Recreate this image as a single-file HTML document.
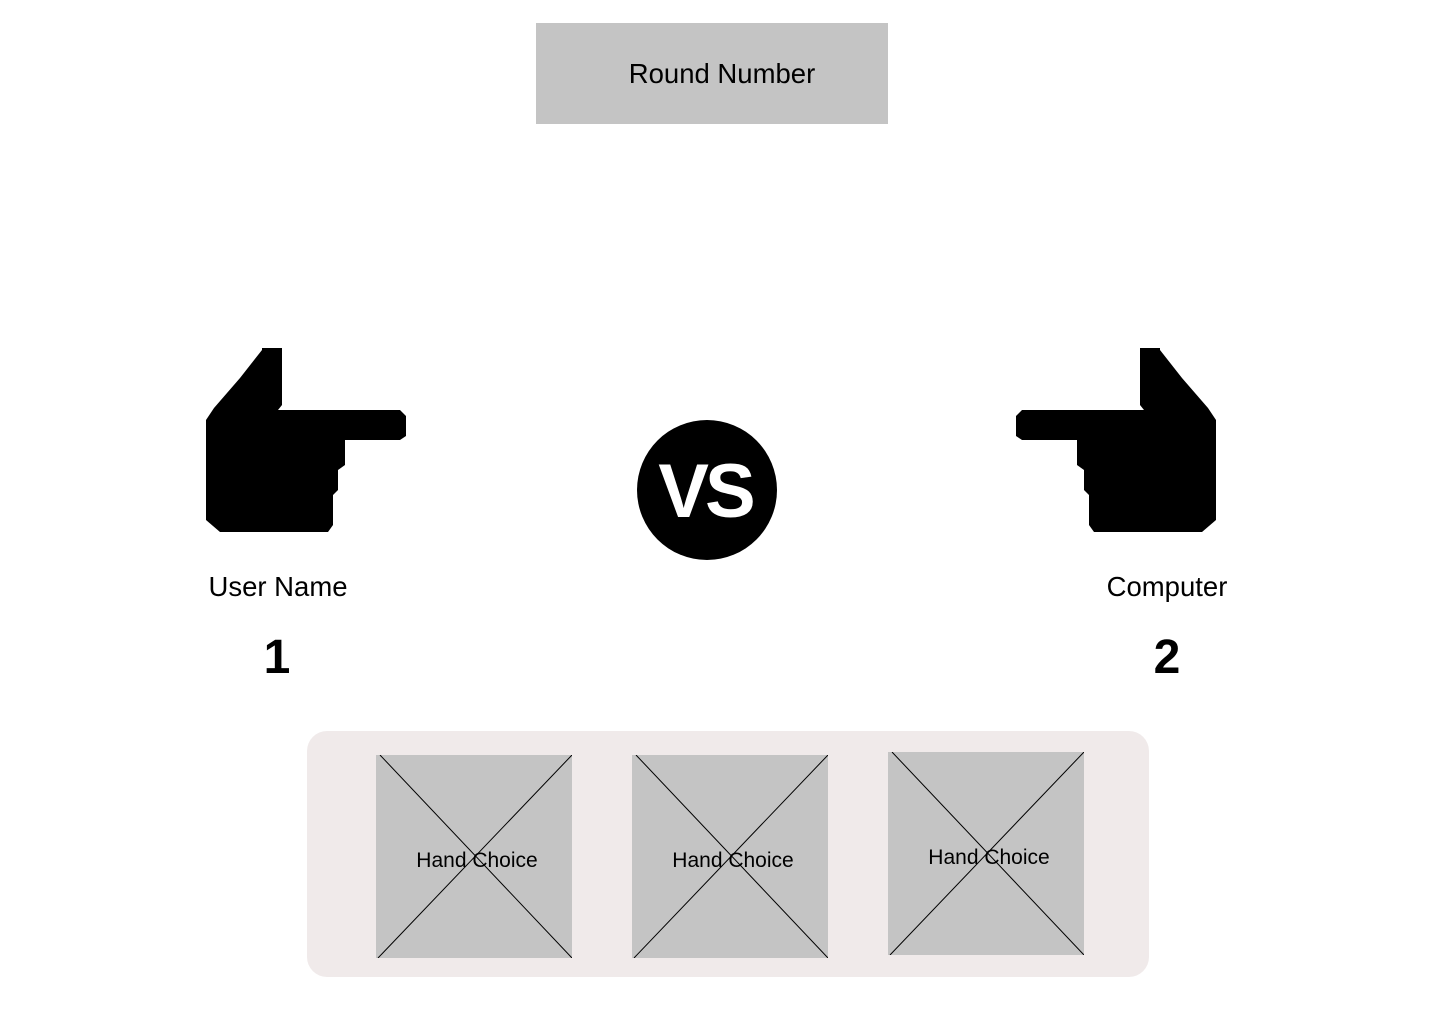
<!DOCTYPE html>
<html><head><style>
body{margin:0;width:1440px;height:1024px;background:#fff;position:relative;font-family:"Liberation Sans",sans-serif;overflow:hidden}
.a{position:absolute}
.round{left:536px;top:23px;width:352px;height:101px;background:#c4c4c4;font-size:27.5px;line-height:101px;text-align:center;text-indent:20px}
.lbl{font-size:27.5px;width:220px;text-align:center}
.num{font-size:48px;font-weight:bold;width:100px;text-align:center}
.panel{left:307px;top:731px;width:842px;height:246px;background:#f0eaea;border-radius:20px}
.box{width:196px;height:203px;background:#c4c4c4}
.box svg{position:absolute;left:0;top:0}
.box span{position:absolute;left:0;right:0;top:94px;text-align:center;font-size:21px;text-indent:6px}
</style></head><body>
<div class="a round">Round Number</div>
<svg class="a" style="left:0;top:0" width="1440" height="600">
<g id="h"><path fill="#000" d="M262,348 L282,348 L282,405 L278,410 L400,410 L406,416 L406,436 L400,440 L345,440 L345,465 L338,470 L338,490 L333,495 L333,525 L328,532 L220,532 L206,520 L206,420 L214,408 L240,378 L262,350 Z"/></g>
<use href="#h" transform="translate(1422,0) scale(-1,1)"/>
<circle cx="707" cy="490" r="70" fill="#000"/>
<text x="705" y="517" fill="#fff" font-size="76" font-weight="bold" font-family="Liberation Sans" text-anchor="middle" letter-spacing="-4">VS</text>
</svg>
<div class="a lbl" style="left:168px;top:571px">User Name</div>
<div class="a lbl" style="left:1057px;top:571px">Computer</div>
<div class="a num" style="left:227px;top:630px">1</div>
<div class="a num" style="left:1117px;top:630px">2</div>
<div class="a panel"></div>
<div class="a box" style="left:376px;top:755px"><svg width="196" height="203"><path d="M4,0L196,203M196,0L2,203" stroke="#000" stroke-width="1"/></svg><span>Hand Choice</span></div>
<div class="a box" style="left:632px;top:755px"><svg width="196" height="203"><path d="M4,0L196,203M196,0L2,203" stroke="#000" stroke-width="1"/></svg><span>Hand Choice</span></div>
<div class="a box" style="left:888px;top:752px"><svg width="196" height="203"><path d="M4,0L196,203M196,0L2,203" stroke="#000" stroke-width="1"/></svg><span>Hand Choice</span></div>
</body></html>
